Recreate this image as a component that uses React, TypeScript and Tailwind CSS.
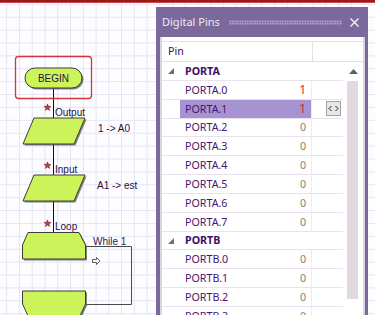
import React from "react";

type Pin = { name: string; value: number; selected?: boolean };
type Port = { name: string; pins: Pin[] };

const ports: Port[] = [
  {
    name: "PORTA",
    pins: [
      { name: "PORTA.0", value: 1 },
      { name: "PORTA.1", value: 1, selected: true },
      { name: "PORTA.2", value: 0 },
      { name: "PORTA.3", value: 0 },
      { name: "PORTA.4", value: 0 },
      { name: "PORTA.5", value: 0 },
      { name: "PORTA.6", value: 0 },
      { name: "PORTA.7", value: 0 },
    ],
  },
  {
    name: "PORTB",
    pins: [
      { name: "PORTB.0", value: 0 },
      { name: "PORTB.1", value: 0 },
      { name: "PORTB.2", value: 0 },
      { name: "PORTB.3", value: 0 },
    ],
  },
];

const STAR =
  "0,-3.6 0.82,-1.13 3.42,-1.11 1.33,0.43 2.12,2.91 0,1.4 -2.12,2.91 -1.33,0.43 -3.42,-1.11 -0.82,-1.13";

const Star = ({ x, y }: { x: number; y: number }) => (
  <polygon points={STAR} transform={`translate(${x} ${y})`} fill="#e23434" stroke="#5a1f2a" strokeWidth="0.6" />
);

const Shape = ({ points }: { points: string }) => (
  <g>
    <polygon points={points} transform="translate(1.5 1.5)" fill="#5a5a5a" opacity="0.75" />
    <polygon points={points} fill="#cdf35b" stroke="#3c3c3c" strokeWidth="1" />
  </g>
);

const Flowchart = () => (
  <svg className="absolute inset-0" width="375" height="315" viewBox="0 0 375 315">
    <g fontFamily="'Liberation Sans', Arial, sans-serif" fontSize="10" fill="#24123e">
      <line x1="53.5" y1="88" x2="53.5" y2="232" stroke="#111" strokeWidth="1" />

      <rect x="15.5" y="56.5" width="76" height="42" rx="3" fill="none" stroke="#d6343c" strokeWidth="1.3" />
      <rect x="26.5" y="69.5" width="57" height="20" rx="10" fill="#5a5a5a" opacity="0.75" />
      <rect x="25" y="68" width="57" height="20" rx="10" fill="#cdf35b" stroke="#3c3c3c" strokeWidth="1" />
      <text x="53.5" y="82" textAnchor="middle" fill="#2a0f3e">BEGIN</text>

      <Star x={47.5} y={107.5} />
      <text x="55" y="115.5">Output</text>
      <Shape points="34,118 85,118 74,144 23,144" />
      <text x="98" y="132">1 -&gt; A0</text>

      <Star x={47.5} y={165.5} />
      <text x="55" y="172.5">Input</text>
      <Shape points="34,175 85,175 74,201 23,201" />
      <text x="97" y="189">A1 -&gt; est</text>

      <Star x={47.5} y={223.5} />
      <text x="55" y="229.5">Loop</text>
      <Shape points="28,232.5 79,232.5 85.5,245 85.5,259 22.5,259 22.5,245" />
      <text x="93" y="244.5" fill="#2c2450">While 1</text>
      <polyline points="86,246.5 131.5,246.5 131.5,304.5 86,304.5" fill="none" stroke="#4a4a4a" strokeWidth="1" />
      <path d="M92.5 259.5 h4 v-2 l3.5 3.5 -3.5 3.5 v-2 h-4 z" fill="#fff" stroke="#333" strokeWidth="0.8" />

      <Shape points="22.5,291 85.5,291 85.5,304 79.5,317 28.5,317 22.5,304" />
    </g>
  </svg>
);

const Triangle = () => (
  <svg width="6" height="6" viewBox="0 0 6 6">
    <polygon points="6,0 6,6 0,6" fill="#6e6e6e" />
  </svg>
);

const GroupRow = ({ name }: { name: string }) => (
  <div className="flex h-[18.85px] items-center border-b border-[#e9e2ee]">
    <div className="flex w-[18px] justify-center pt-[1px]">
      <Triangle />
    </div>
    <span className="pl-[5px] font-bold text-[#3d0e68]">{name}</span>
  </div>
);

const PinRow = ({ pin }: { pin: Pin }) => (
  <div className="flex h-[18.85px] border-b border-[#e9e2ee]">
    <div className="w-[18px]" />
    <div className={`flex w-[131px] items-center ${pin.selected ? "bg-[#a893d2]" : ""}`}>
      <span className="flex-1 pl-[5px] text-[#4a1470]">{pin.name}</span>
      <span className={`pr-[5px] ${pin.value ? "text-[12px] text-[#f21414]" : "text-[#8c7e70]"}`}>{pin.value}</span>
    </div>
    <div className="flex w-[32px] items-center justify-end border-l border-[#efe9f2] pr-[2px]">
      {pin.selected && (
        <div className="flex h-[15px] w-[15px] items-center justify-center border border-[#a2a2a2] bg-[#e6e6e6]">
          <svg width="11" height="7" viewBox="0 0 11 7">
            <path d="M3.5 1 L1 3.5 L3.5 6 M7.5 1 L10 3.5 L7.5 6" fill="none" stroke="#222" strokeWidth="1" />
          </svg>
        </div>
      )}
    </div>
  </div>
);

const DigitalPins = () => (
  <div className="absolute left-[156px] top-[7px] flex h-[320px] w-[212px] flex-col bg-[#7b699b] font-['Noto_Sans',sans-serif] text-[10.7px]">
    <div className="flex h-[30px] shrink-0 items-center pl-[6px] pr-[9px]">
      <span className="text-[11px] text-[#eeeaf6]">Digital Pins</span>
      <div className="ml-[9px] h-[5px] flex-1 bg-[radial-gradient(circle,#b0a2cc_0.8px,transparent_1px)] bg-[length:2.5px_2.5px]" />
      <svg className="ml-[8px]" width="9" height="9" viewBox="0 0 9 9">
        <path d="M0.5 0.5 L8.5 8.5 M8.5 0.5 L0.5 8.5" stroke="#f4f2f8" strokeWidth="1.4" />
      </svg>
    </div>
    <div className="ml-[4px] mr-[3px] flex flex-1 flex-col border-x-2 border-[#dad4e0] bg-white">
      <div className="flex h-[25px] shrink-0 flex-col pt-[4px]">
        <div className="flex flex-1 border-y border-[#e2e2e2]">
          <div className="flex w-[150px] items-center pl-[6px] text-[#3d0e68]">Pin</div>
          <div className="border-l border-[#e2e2e2]" />
        </div>
      </div>
      <div className="flex">
        <div className="w-[181px]">
          {ports.map((port) => (
            <div key={port.name}>
              <GroupRow name={port.name} />
              {port.pins.map((pin) => (
                <PinRow key={pin.name} pin={pin} />
              ))}
            </div>
          ))}
        </div>
        <div className="w-[20px]">
          <div className="flex h-[19px] items-center justify-center">
            <svg width="9" height="5" viewBox="0 0 9 5">
              <polygon points="4.5,0 9,5 0,5" fill="#5e5e5e" />
            </svg>
          </div>
          <div className="ml-[4px] h-[218px] w-[11px] bg-[#e2d8e2]" />
        </div>
      </div>
    </div>
  </div>
);

export default function App() {
  return (
    <div className="relative h-[315px] w-[375px] overflow-hidden bg-[#fdfdff] bg-[linear-gradient(to_right,#e4e4f5_1.3px,transparent_1.3px),linear-gradient(to_bottom,#e4e4f5_1.3px,transparent_1.3px)] bg-[length:12.77px_12.9px] bg-[position:6.2px_3.8px]">
      <div className="h-[3px] border-b border-[#c44848] bg-[#9a1818]" />
      <Flowchart />
      <DigitalPins />
    </div>
  );
}
